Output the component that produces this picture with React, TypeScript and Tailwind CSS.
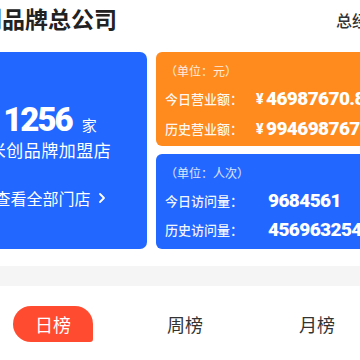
import React from "react";

const cjk = { fontFamily: '"Noto Sans CJK SC", "Noto Sans", sans-serif' };
const num = { fontFamily: 'Roboto, "Noto Sans CJK SC", sans-serif' };

function Row({ label, value, yen }: { label: string; value: string; yen?: boolean }) {
  return (
    <div className="flex items-center h-[20px] whitespace-nowrap">
      <div className="w-[91px] shrink-0 text-[13px] leading-[20px] font-medium text-white/95">{label}</div>
      {yen ? (
        <div className="flex items-center">
          <span className="text-[14px] font-black text-white w-[10px]" style={num}>¥</span>
          <span className="text-[19px] font-black tracking-[-0.6px] text-white leading-[20px]" style={num}>{value}</span>
        </div>
      ) : (
        <span className="ml-[12px] text-[19px] font-black tracking-[-0.6px] text-white leading-[20px]" style={num}>{value}</span>
      )}
    </div>
  );
}

export default function App() {
  return (
    <div className="w-[360px] h-[360px] overflow-hidden bg-white" style={cjk}>
      <div className="ml-[-47px] w-[470px]">
        <div className="h-[36px] flex items-center whitespace-nowrap">
          <div className="shrink-0 pl-[3px] text-[23px] leading-[36px] font-bold text-[#222]">米创品牌总公司</div>
          <div className="shrink-0 ml-[219px] text-[16px] font-medium text-[#333] mt-[4px]">总经理</div>
        </div>
        <div className="mt-[16px] flex gap-[9px]">
          <div className="w-[194px] h-[197px] shrink-0 rounded-[7px] bg-[#2267ff] flex flex-col items-center pt-[52px] text-white whitespace-nowrap">
            <div className="flex items-baseline h-[32px] leading-[32px]">
              <span className="text-[33px] font-black tracking-[-2px]" style={num}>1256</span>
              <span className="ml-[10px] text-[15px]">家</span>
            </div>
            <div className="mt-[4px] text-[17px] leading-[20px] tracking-[0.5px]">米创品牌加盟店</div>
            <div className="mt-[28px] flex items-center text-[16px] leading-[20px]">
              <span>查看全部门店</span>
              <svg className="ml-[7px]" width="8" height="12" viewBox="0 0 8 12" fill="none">
                <path d="M2 2l4 4-4 4" stroke="white" strokeWidth="1.8" strokeLinecap="round" strokeLinejoin="round" />
              </svg>
            </div>
          </div>
          <div className="w-[240px] shrink-0 flex flex-col gap-[8px]">
            <div className="h-[94px] rounded-[6px] bg-[#ff8a1e] pl-[9px] pt-[10px] flex flex-col">
              <div className="text-[12px] leading-[18px] text-white/85">（单位：元）</div>
              <div className="mt-[9px]"><Row label="今日营业额：" value="46987670.88" yen /></div>
              <div className="mt-[10px]"><Row label="历史营业额：" value="9946987670.88" yen /></div>
            </div>
            <div className="h-[95px] rounded-[6px] bg-[#2267ff] pl-[9px] pt-[10px] flex flex-col">
              <div className="text-[12px] leading-[18px] text-white/85">（单位：人次）</div>
              <div className="mt-[9px]"><Row label="今日访问量：" value="9684561" /></div>
              <div className="mt-[9px]"><Row label="历史访问量：" value="4569632548" /></div>
            </div>
          </div>
        </div>
        <div className="mt-[17px] h-[20px] bg-[#f5f5f5]" />
        <div className="mt-[20px] flex gap-[52px] pl-[60px]">
          <div className="w-[80px] h-[36px] shrink-0 rounded-[18px] rounded-br-[3px] bg-[#ff4b2f] flex items-center justify-center text-white text-[18px]">日榜</div>
          <div className="w-[80px] h-[36px] shrink-0 flex items-center justify-center text-[#333] text-[18px]">周榜</div>
          <div className="w-[80px] h-[36px] shrink-0 flex items-center justify-center text-[#333] text-[18px]">月榜</div>
        </div>
      </div>
    </div>
  );
}
